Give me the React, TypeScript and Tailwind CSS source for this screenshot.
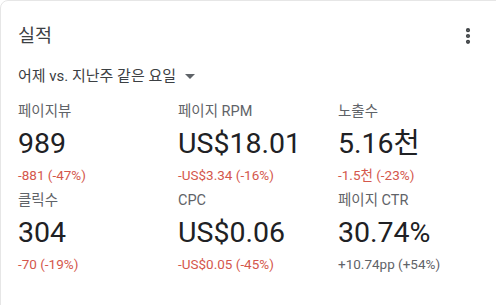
import { MoreVertical } from "lucide-react";

type Metric = {
  label: string;
  value: string;
  delta: string;
  up?: boolean;
};

const metrics: Metric[] = [
  { label: "페이지뷰", value: "989", delta: "-881 (-47%)" },
  { label: "페이지 RPM", value: "US$18.01", delta: "-US$3.34 (-16%)" },
  { label: "노출수", value: "5.16천", delta: "-1.5천 (-23%)" },
  { label: "클릭수", value: "304", delta: "-70 (-19%)" },
  { label: "CPC", value: "US$0.06", delta: "-US$0.05 (-45%)" },
  { label: "페이지 CTR", value: "30.74%", delta: "+10.74pp (+54%)", up: true },
];

function MetricCell({ m }: { m: Metric }) {
  return (
    <div className="flex flex-col">
      <div className="text-[14.5px] leading-[20px] text-[#5f6368]">{m.label}</div>
      <div className="mt-[2px] text-[28.5px] leading-[40px] text-[#202124]">{m.value}</div>
      <div
        className={`mt-[1px] text-[13.5px] leading-[20px] ${
          m.up ? "text-[#5f6368]" : "text-[#d4574c]"
        }`}
      >
        {m.delta}
      </div>
    </div>
  );
}

export default function App() {
  return (
    <div className="w-[496px] h-[305px] overflow-hidden bg-white">
      <div
        className="w-[520px] h-[330px] rounded-lg border border-[#e6e6e6] bg-white pl-[17px] pt-[23px]"
        style={{ fontFamily: "Roboto, 'Noto Sans CJK KR', sans-serif" }}
      >
        <div className="flex items-center justify-between w-[460px]">
          <div className="text-[18.5px] leading-[24px] text-[#3c4043]">실적</div>
          <MoreVertical className="w-5 h-5 text-[#3c4043]" strokeWidth={3} />
        </div>
        <div className="mt-[18px] flex items-center gap-[9px] text-[15px] leading-[20px] text-[#3c4043]">
          <span>어제 vs. 지난주 같은 요일</span>
          <svg width="10" height="5" viewBox="0 0 10 5">
            <path d="M0 0 L10 0 L5 5 Z" fill="#5f6368" />
          </svg>
        </div>
        <div className="mt-[16px] grid grid-cols-[160px_160px_160px] gap-y-[6px]">
          {metrics.map((m) => (
            <MetricCell key={m.label} m={m} />
          ))}
        </div>
      </div>
    </div>
  );
}
